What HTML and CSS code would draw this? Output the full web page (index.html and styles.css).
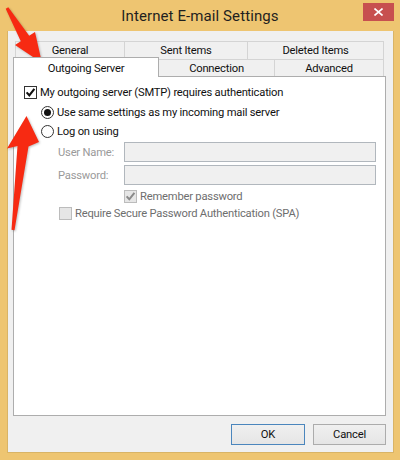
FILE: index.html
```html
<!DOCTYPE html>
<html>
<head>
<meta charset="utf-8">
<link rel="stylesheet" href="styles.css">
</head>
<body>
<div class="window">
  <div class="titlebar">
    <span></span>
    <div class="title">Internet E-mail Settings</div>
    <div class="close-cell">
      <div class="close">
        <svg width="9" height="8" viewBox="0 0 9 8"><path d="M0.5 0.5 L8.5 7.5 M8.5 0.5 L0.5 7.5" stroke="#fff" stroke-width="1.6" fill="none"/></svg>
      </div>
    </div>
  </div>
  <div class="client">
    <div class="tabs">
      <div class="tabrow back">
        <div class="tab t-general">General</div>
        <div class="tab t-sent">Sent Items</div>
        <div class="tab t-deleted">Deleted Items</div>
      </div>
      <div class="tabrow front">
        <div class="tab selected">Outgoing Server</div>
        <div class="tab t-conn">Connection</div>
        <div class="tab t-adv">Advanced</div>
      </div>
    </div>
    <div class="panel">
      <div class="line l-auth">
        <span class="check on">
          <svg width="11" height="11" viewBox="0 0 11 11"><path d="M1.6 5.4 L4.3 8.3 L9.4 1.8" stroke="#111" stroke-width="2.1" fill="none"/></svg>
        </span>
        <span class="txt">My outgoing server (SMTP) requires authentication</span>
      </div>
      <div class="line l-same">
        <span class="radio on"><span class="dot"></span></span>
        <span class="txt">Use same settings as my incoming mail server</span>
      </div>
      <div class="line l-logon">
        <span class="radio"></span>
        <span class="txt">Log on using</span>
      </div>
      <div class="field f-user">
        <span class="flabel">User Name:</span>
        <span class="input"></span>
      </div>
      <div class="field f-pass">
        <span class="flabel">Password:</span>
        <span class="input"></span>
      </div>
      <div class="line l-remember">
        <span class="check disabled">
          <svg width="11" height="11" viewBox="0 0 11 11"><path d="M1.6 5.4 L4.3 8.3 L9.4 1.8" stroke="#8a8a8a" stroke-width="2" fill="none"/></svg>
        </span>
        <span class="txt dim">Remember password</span>
      </div>
      <div class="line l-spa">
        <span class="check disabled"></span>
        <span class="txt dim">Require Secure Password Authentication (SPA)</span>
      </div>
    </div>
    <div class="buttons">
      <div class="btn default">OK</div>
      <div class="btn">Cancel</div>
    </div>
  </div>
</div>
<svg class="arrows" width="400" height="460" viewBox="0 0 400 460">
  <polygon points="8.3,7.2 29.2,35.8 35,32 42,63 15,45 20.8,41.2 5.7,8.8" fill="#f72a12"/>
  <polygon points="11.5,229.8 17.5,146 7,148.5 26.5,116 39,142 28.5,146.6 14.5,230.2" fill="#f72a12"/>
</svg>
</body>
</html>
```
FILE: styles.css
```css
html, body {
  margin: 0;
  padding: 0;
}
body {
  width: 400px;
  height: 460px;
  background: #eec571;
  font-family: "Segoe UI", Roboto, "Noto Sans", sans-serif;
  font-size: 11.2px;
  letter-spacing: -0.2px;
  color: #111;
  overflow: hidden;
}
.window {
  width: 400px;
  height: 460px;
}
.titlebar {
  height: 31px;
  display: grid;
  grid-template-columns: 1fr auto 1fr;
  align-items: start;
}
.title {
  font-size: 15px;
  color: #1f1f1f;
  line-height: 32px;
  letter-spacing: 0.1px;
}
.close-cell {
  display: flex;
  justify-content: flex-end;
  padding-top: 3px;
  padding-right: 6px;
}
.close {
  width: 31px;
  height: 18px;
  background: #c7504f;
  display: flex;
  align-items: center;
  justify-content: center;
}
.client {
  margin: 0 6px 0 7px;
  height: 422px;
  box-sizing: border-box;
  background: #f0f0f0;
  border: 1px solid #d9b466;
  border-top: none;
  padding: 10px 0 0 5px;
}
.tabs {
  width: 373px;
}
.tabrow {
  display: flex;
  margin: 0 2px;
}
.tab {
  box-sizing: border-box;
  display: flex;
  align-items: center;
  justify-content: center;
  border: 1px solid #d4d4d4;
  border-bottom: none;
  background: #f0f0f0;
  color: #111;
  white-space: nowrap;
}
.back .tab {
  height: 18px;
}
.front .tab {
  height: 17px;
}
.t-general { width: 110px; }
.t-sent { width: 124px; margin-left: -1px; }
.t-deleted { width: 137px; margin-left: -1px; }
.tab.selected {
  position: relative;
  z-index: 1;
  width: 146px;
  height: 20px;
  margin: -2px 0 -1px -2px;
  background: #fff;
  border-color: #adadad;
  padding-top: 1px;
}
.t-conn { width: 117px; margin-left: -1px; }
.t-adv { width: 110px; margin-left: -1px; }
.panel {
  box-sizing: border-box;
  width: 373px;
  height: 340px;
  background: #fff;
  border: 1px solid #adadad;
  padding: 9px 0 0 10px;
}
.line {
  display: flex;
  align-items: center;
  height: 13px;
  white-space: nowrap;
}
.l-same { margin: 7px 0 0 17px; }
.l-logon { margin: 6px 0 0 17px; }
.l-remember { margin: 5px 0 0 100px; }
.l-spa { margin: 4px 0 0 35px; }
.txt {
  margin-left: 3px;
}
.txt.dim {
  color: #6e6e6e;
}
.check, .radio {
  box-sizing: border-box;
  width: 13px;
  height: 13px;
  flex: none;
  display: flex;
  align-items: center;
  justify-content: center;
}
.check {
  border: 1px solid #333;
  background: #fff;
}
.check.disabled {
  border-color: #bcbcbc;
  background: #e6e6e6;
}
.radio {
  border: 1px solid #333;
  border-radius: 50%;
  background: #fff;
}
.radio .dot {
  width: 7px;
  height: 7px;
  border-radius: 50%;
  background: #111;
}
.field {
  display: flex;
  align-items: center;
  height: 20px;
  margin-left: 34px;
}
.f-user { margin-top: 4px; }
.f-pass { margin-top: 3px; }
.flabel {
  width: 66px;
  color: #9a9a9a;
}
.input {
  box-sizing: border-box;
  width: 252px;
  height: 20px;
  border: 1px solid #b1b7bd;
  background: #f0f0f0;
}
.buttons {
  display: flex;
  justify-content: flex-end;
  gap: 8px;
  width: 373px;
  margin-top: 8px;
}
.btn {
  box-sizing: border-box;
  height: 21px;
  width: 73px;
  border: 1px solid #acacac;
  background: linear-gradient(#f0f0f0, #e5e5e5);
  display: flex;
  align-items: center;
  justify-content: center;
  color: #111;
}
.btn.default {
  width: 74px;
  border-color: #4b86bd;
}
.arrows {
  position: absolute;
  left: 0;
  top: 0;
  pointer-events: none;
  filter: drop-shadow(1px 1px 1px rgba(0,0,0,0.25));
}
```
